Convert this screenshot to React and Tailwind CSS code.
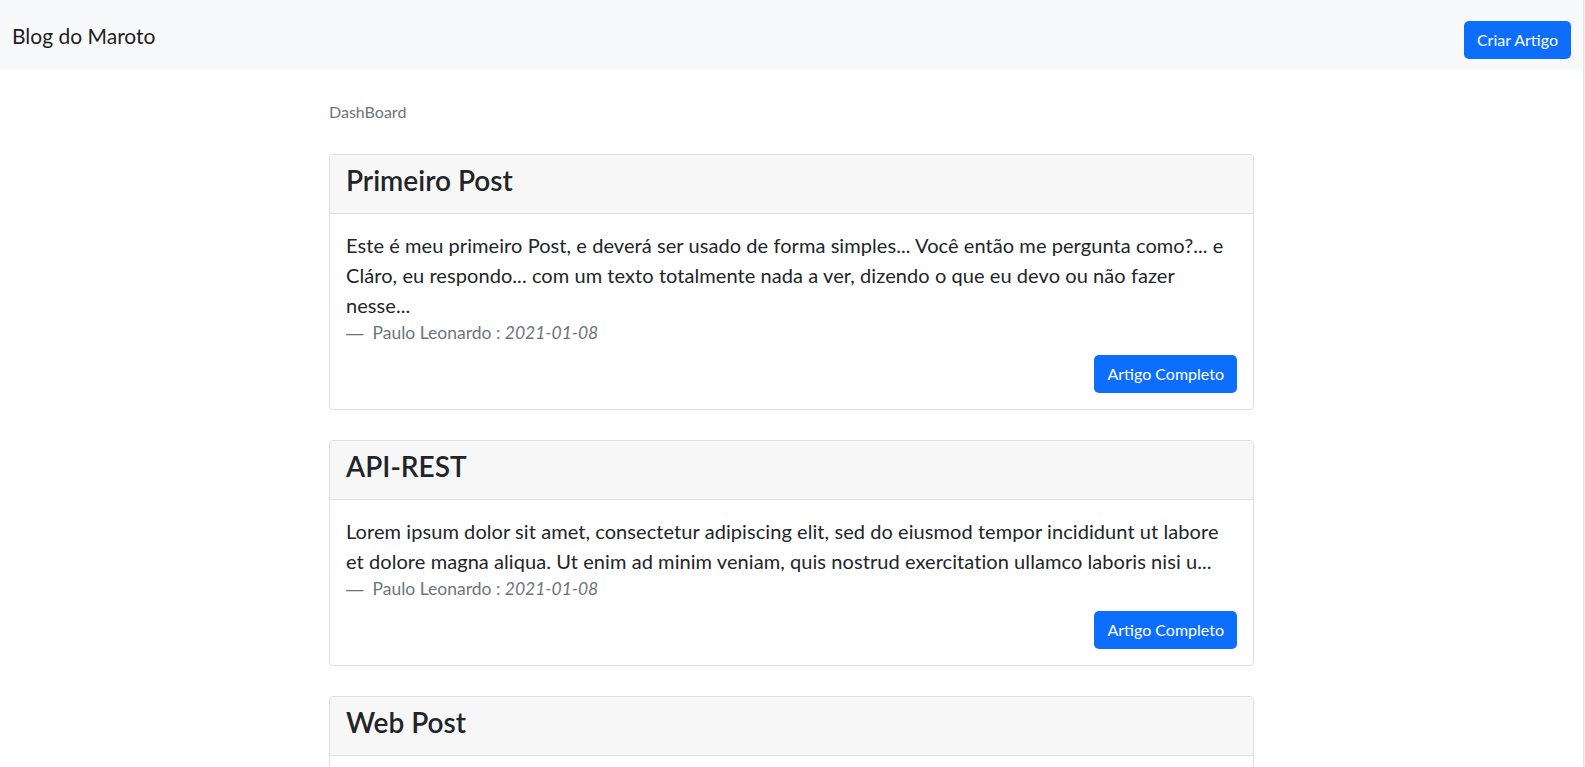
import React from "react";

const posts = [
  {
    title: "Primeiro Post",
    text:
      "Este é meu primeiro Post, e deverá ser usado de forma simples... Você então me pergunta como?... e Cláro, eu respondo... com um texto totalmente nada a ver, dizendo o que eu devo ou não fazer nesse...",
  },
  {
    title: "API-REST",
    text:
      "Lorem ipsum dolor sit amet, consectetur adipiscing elit, sed do eiusmod tempor incididunt ut labore et dolore magna aliqua. Ut enim ad minim veniam, quis nostrud exercitation ullamco laboris nisi u...",
  },
  {
    title: "Web Post",
    text:
      "Lorem ipsum dolor sit amet, consectetur adipiscing elit, sed do eiusmod tempor incididunt ut labore et dolore magna aliqua.",
  },
];

function Card({ post }) {
  return (
    <div className="mb-[30px] rounded-[4px] border border-[#dfdfdf] bg-white">
      <div className="border-b border-[#dfdfdf] bg-[#f7f7f7] px-4 pt-2 pb-4 rounded-t-[3px]">
        <h3 className="text-[28px] leading-[34px] font-semibold text-[#212529]">
          {post.title}
        </h3>
      </div>
      <div className="p-4">
        <p className="text-[20px] leading-[30px] tracking-[0.07px] text-[#212529]">
          {post.text}
        </p>
        <p className="text-[17.5px] leading-[26px] text-[#6c757d] mb-[9px]">
          <span className="font-['Liberation_Sans',sans-serif]">{"\u2014"}</span>
          {"\u00a0\u00a0"}Paulo Leonardo : <em className="italic">2021-01-08</em>
        </p>
        <div className="flex justify-end">
          <button className="h-[38px] rounded-[5px] bg-[#0d6efd] px-[13px] text-[16px] leading-[24px] text-white">
            Artigo Completo
          </button>
        </div>
      </div>
    </div>
  );
}

export default function App() {
  return (
    <div
      className="flex min-h-[767px] bg-white text-[#212529]"
      style={{ fontFamily: 'Lato, sans-serif' }}
    >
      <div className="flex-1">
        <nav className="flex h-[70px] items-start justify-between bg-[#f8f9fa] px-3 pt-[21px]">
          <span className="text-[21px] leading-[30px] text-[rgba(0,0,0,0.9)]">
            Blog do Maroto
          </span>
          <button className="h-[38px] rounded-[5px] bg-[#0d6efd] px-[13px] text-[16px] leading-[24px] text-white">
            Criar Artigo
          </button>
        </nav>
        <main className="mx-auto w-[925px] pt-[31px]">
          <div className="text-[16px] leading-[21px] text-[#6c757d] mb-[32px]">
            DashBoard
          </div>
          {posts.map((p) => (
            <Card key={p.title} post={p} />
          ))}
        </main>
      </div>
      <div className="w-[2px] border-l border-[#e3e3e3] bg-[#f0f0f0]" />
    </div>
  );
}
